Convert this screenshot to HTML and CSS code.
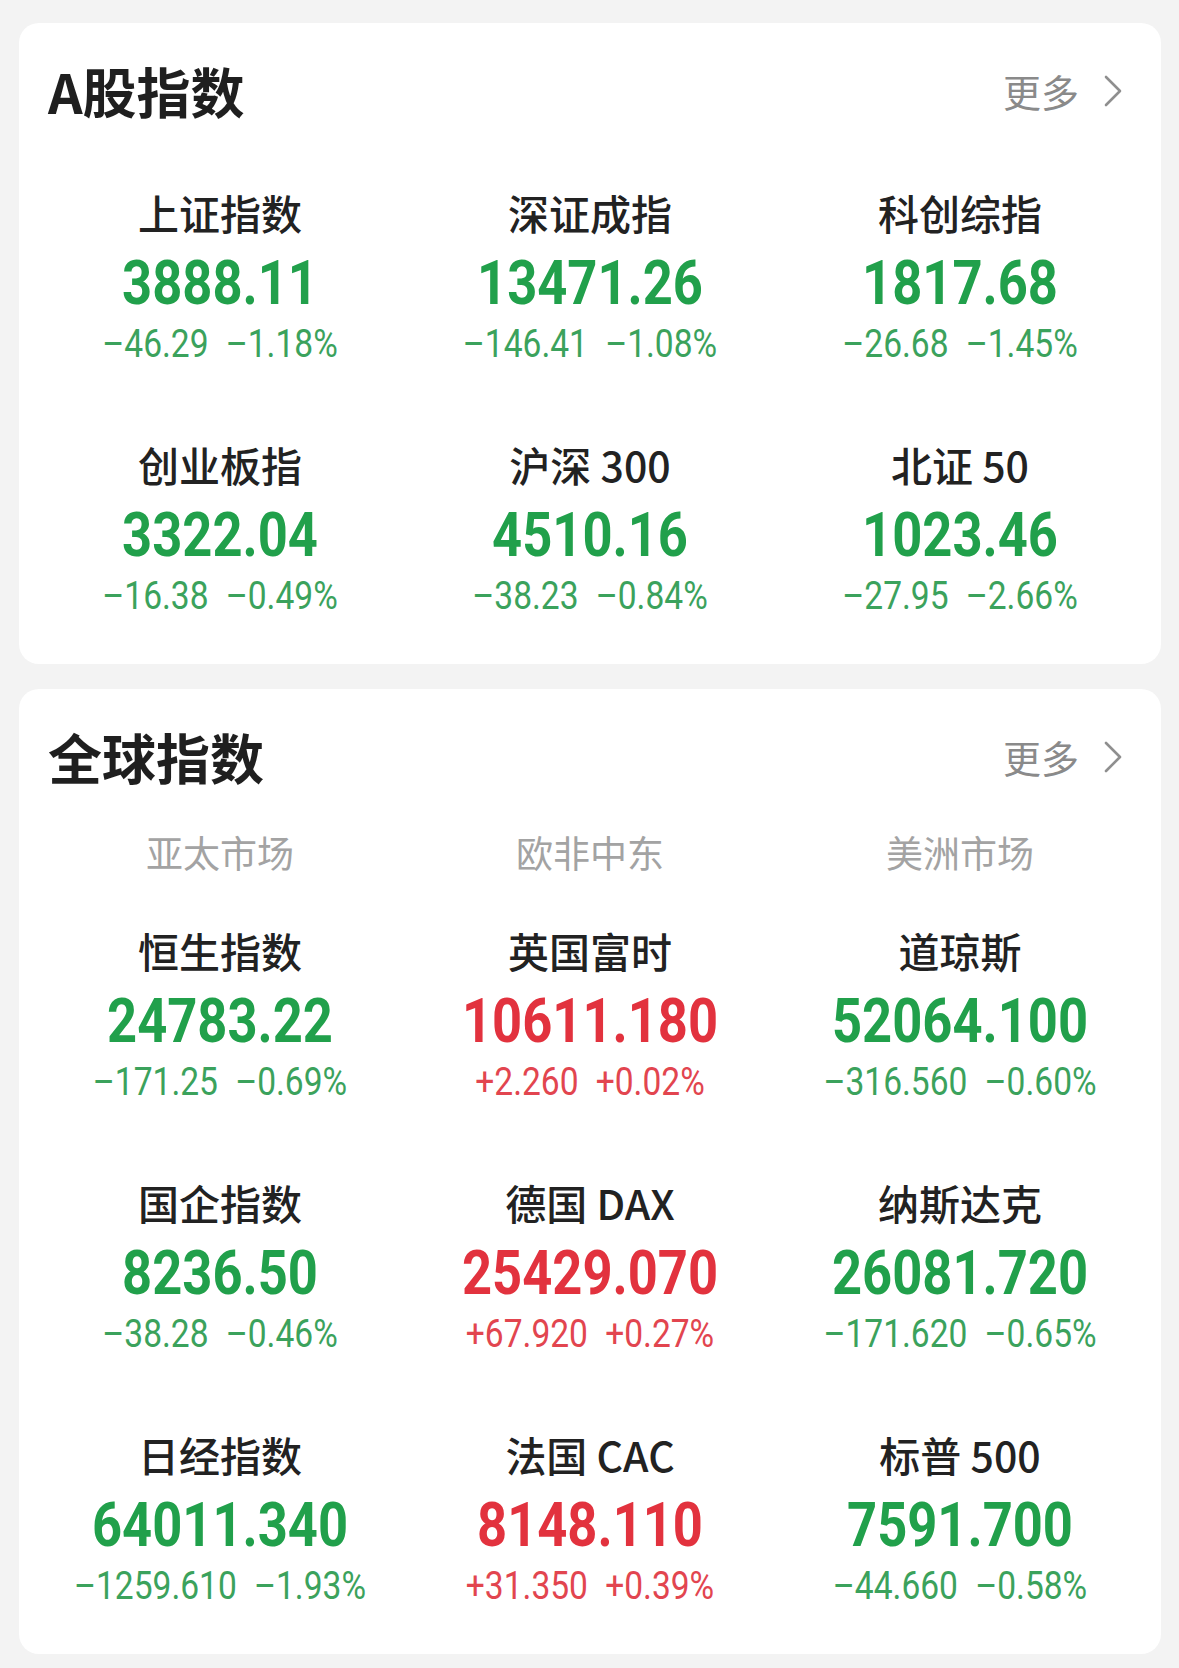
FILE: index.html
```html
<!DOCTYPE html>
<html lang="zh-CN">
<head>
    <meta charset="UTF-8">
    <meta name="viewport" content="width=device-width, initial-scale=1.0">
    <title>指数行情</title>
    <link rel="stylesheet" href="styles.css">
</head>
<body>
    <div class="page">
        <section class="card">
            <div class="card-head">
                <h2 class="card-title">A股指数</h2>
                <a class="more" href="#">更多
                    <svg class="chevron" viewBox="0 0 20 34" width="20" height="34"><polyline points="3,3 17,17 3,31"/></svg>
                </a>
            </div>
            <div class="quote-grid">
                <div class="quote down">
                    <div class="quote-name">上证指数</div>
                    <div class="quote-price">3888.11</div>
                    <div class="quote-change"><span>–46.29</span><span>–1.18%</span></div>
                </div>
                <div class="quote down">
                    <div class="quote-name">深证成指</div>
                    <div class="quote-price">13471.26</div>
                    <div class="quote-change"><span>–146.41</span><span>–1.08%</span></div>
                </div>
                <div class="quote down">
                    <div class="quote-name">科创综指</div>
                    <div class="quote-price">1817.68</div>
                    <div class="quote-change"><span>–26.68</span><span>–1.45%</span></div>
                </div>
                <div class="quote down">
                    <div class="quote-name">创业板指</div>
                    <div class="quote-price">3322.04</div>
                    <div class="quote-change"><span>–16.38</span><span>–0.49%</span></div>
                </div>
                <div class="quote down">
                    <div class="quote-name">沪深 300</div>
                    <div class="quote-price">4510.16</div>
                    <div class="quote-change"><span>–38.23</span><span>–0.84%</span></div>
                </div>
                <div class="quote down">
                    <div class="quote-name">北证 50</div>
                    <div class="quote-price">1023.46</div>
                    <div class="quote-change"><span>–27.95</span><span>–2.66%</span></div>
                </div>
            </div>
        </section>

        <section class="card">
            <div class="card-head">
                <h2 class="card-title">全球指数</h2>
                <a class="more" href="#">更多
                    <svg class="chevron" viewBox="0 0 20 34" width="20" height="34"><polyline points="3,3 17,17 3,31"/></svg>
                </a>
            </div>
            <div class="market-tabs">
                <span>亚太市场</span>
                <span>欧非中东</span>
                <span>美洲市场</span>
            </div>
            <div class="quote-grid">
                <div class="quote down">
                    <div class="quote-name">恒生指数</div>
                    <div class="quote-price">24783.22</div>
                    <div class="quote-change"><span>–171.25</span><span>–0.69%</span></div>
                </div>
                <div class="quote up">
                    <div class="quote-name">英国富时</div>
                    <div class="quote-price">10611.180</div>
                    <div class="quote-change"><span>+2.260</span><span>+0.02%</span></div>
                </div>
                <div class="quote down">
                    <div class="quote-name">道琼斯</div>
                    <div class="quote-price">52064.100</div>
                    <div class="quote-change"><span>–316.560</span><span>–0.60%</span></div>
                </div>
                <div class="quote down">
                    <div class="quote-name">国企指数</div>
                    <div class="quote-price">8236.50</div>
                    <div class="quote-change"><span>–38.28</span><span>–0.46%</span></div>
                </div>
                <div class="quote up">
                    <div class="quote-name">德国 DAX</div>
                    <div class="quote-price">25429.070</div>
                    <div class="quote-change"><span>+67.920</span><span>+0.27%</span></div>
                </div>
                <div class="quote down">
                    <div class="quote-name">纳斯达克</div>
                    <div class="quote-price">26081.720</div>
                    <div class="quote-change"><span>–171.620</span><span>–0.65%</span></div>
                </div>
                <div class="quote down">
                    <div class="quote-name">日经指数</div>
                    <div class="quote-price">64011.340</div>
                    <div class="quote-change"><span>–1259.610</span><span>–1.93%</span></div>
                </div>
                <div class="quote up">
                    <div class="quote-name">法国 CAC</div>
                    <div class="quote-price">8148.110</div>
                    <div class="quote-change"><span>+31.350</span><span>+0.39%</span></div>
                </div>
                <div class="quote down">
                    <div class="quote-name">标普 500</div>
                    <div class="quote-price">7591.700</div>
                    <div class="quote-change"><span>–44.660</span><span>–0.58%</span></div>
                </div>
            </div>
        </section>
    </div>
</body>
</html>
```

FILE: styles.css
```css
* {
    box-sizing: border-box;
}
body {
    margin: 0;
    background: #f3f3f3;
    font-family: "Noto Sans CJK SC", "Noto Sans", sans-serif;
    color: #222;
}
.page {
    padding: 23px 18px 15px 19px;
    display: flex;
    flex-direction: column;
    gap: 25px;
}
.card {
    background: #fff;
    border-radius: 20px;
    padding: 36px 16px 48px;
}
.card-head {
    display: flex;
    align-items: center;
    justify-content: space-between;
    height: 64px;
    padding: 0 22px 0 13px;
}
.card-title {
    margin: 0;
    font-size: 54px;
    font-weight: 700;
    line-height: 64px;
    color: #1f1f1f;
}
.more {
    display: flex;
    align-items: center;
    gap: 24px;
    font-size: 38px;
    line-height: 48px;
    color: #8a8a8a;
    text-decoration: none;
}
.chevron {
    display: block;
}
.chevron polyline {
    fill: none;
    stroke: #8f8f8f;
    stroke-width: 2.6;
    stroke-linecap: round;
    stroke-linejoin: round;
}
.market-tabs {
    display: grid;
    grid-template-columns: repeat(3, 1fr);
    margin-top: 39px;
    font-size: 37px;
    line-height: 48px;
    color: #a3a3a3;
    text-align: center;
}
.quote-grid {
    display: grid;
    grid-template-columns: repeat(3, 1fr);
    row-gap: 76px;
    margin-top: 65px;
}
.market-tabs + .quote-grid {
    margin-top: 50px;
}
.quote {
    text-align: center;
}
.quote-name {
    font-size: 41px;
    font-weight: 500;
    line-height: 48px;
    color: #222;
}
.quote-price {
    margin-top: 12px;
    font-family: Roboto, "Noto Sans", sans-serif;
    font-size: 61px;
    font-weight: 700;
    line-height: 70px;
    transform: scaleX(0.86);
}
.quote-change {
    margin-top: 6px;
    font-family: Roboto, "Noto Sans", sans-serif;
    font-size: 39px;
    line-height: 40px;
    transform: scaleX(0.86);
}
.quote-change span + span {
    margin-left: 20px;
}
.down .quote-price {
    color: #21a04b;
}
.down .quote-change {
    color: #3ba25c;
}
.up .quote-price {
    color: #e2323e;
}
.up .quote-change {
    color: #e2454f;
}
```
